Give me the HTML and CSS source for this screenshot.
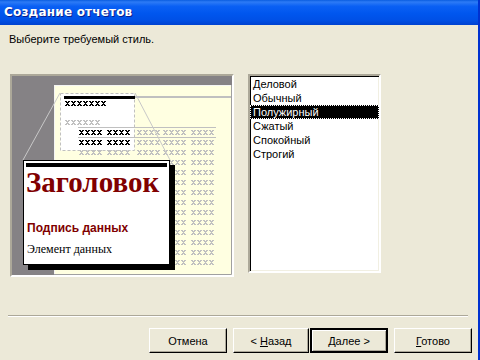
FILE: index.html
```html
<!DOCTYPE html>
<html lang="ru">
<head>
    <meta charset="UTF-8">
    <title>Создание отчетов</title>
    <link rel="stylesheet" href="styles.css">
</head>
<body>
    <div class="window">
        <div class="titlebar">Создание отчетов</div>

        <div class="client">
            <p class="prompt">Выберите требуемый стиль.</p>

            <div class="main">
                <div class="preview">
                    <svg width="220" height="199" viewBox="12 76 220 199">
                        <defs>
                            <pattern id="xb" width="6" height="5" patternUnits="userSpaceOnUse">
                                <path d="M0 0h2v1h-2zM3 0h2v1h-2zM1 1h3v1h-3zM2 2h1v1h-1zM1 3h3v1h-3zM0 4h2v1h-2zM3 4h2v1h-2z" fill="#000"/>
                            </pattern>
                            <pattern id="xg" width="6" height="5" patternUnits="userSpaceOnUse">
                                <path d="M0 0h2v1h-2zM3 0h2v1h-2zM1 1h3v1h-3zM2 2h1v1h-1zM1 3h3v1h-3zM0 4h2v1h-2zM3 4h2v1h-2z" fill="#c0c0c0"/>
                            </pattern>
                            <g id="row">
                                <rect x="0" width="24" height="5" fill="url(#xg)" transform="translate(79,0)"/>
                                <rect x="0" width="24" height="5" fill="url(#xg)" transform="translate(107,0)"/>
                                <rect x="0" width="24" height="5" fill="url(#xg)" transform="translate(137,0)"/>
                                <rect x="0" width="24" height="5" fill="url(#xg)" transform="translate(163,0)"/>
                                <rect x="0" width="24" height="5" fill="url(#xg)" transform="translate(191,0)"/>
                            </g>
                        </defs>

                        <rect x="12" y="76" width="220" height="199" fill="#858285"/>

                        <!-- page -->
                        <rect x="54" y="85" width="178" height="190" fill="#ffffe1"/>
                        <path d="M54.5 275V85.5H232" stroke="#f4f4f4" fill="none"/>
                        <path d="M54 274.5H231.5V85" stroke="#a0a0a0" fill="none"/>
                        <rect x="135" y="96" width="96" height="2" fill="#c0c0c0"/>

                        <!-- zoomed area -->
                        <rect x="60.5" y="93.5" width="74" height="57" fill="#fff" stroke="#c0c0c0" stroke-dasharray="3 2"/>
                        <rect x="64" y="96" width="71" height="3" fill="#000"/>
                        <rect x="0" width="42" height="5" fill="url(#xb)" transform="translate(65,101)"/>
                        <rect x="0" width="36" height="5" fill="url(#xg)" transform="translate(65,120)"/>
                        <path d="M78 127.5H216M78 137.5H216" stroke="#c0c0c0"/>

                        <use href="#row" y="130"/>
                        <use href="#row" y="140"/>
                        <rect x="0" width="24" height="5" fill="#fff" transform="translate(79,130)"/>
                        <rect x="0" width="24" height="5" fill="#fff" transform="translate(107,130)"/>
                        <rect x="0" width="24" height="5" fill="#fff" transform="translate(79,140)"/>
                        <rect x="0" width="24" height="5" fill="#fff" transform="translate(107,140)"/>
                        <rect x="0" width="24" height="5" fill="url(#xb)" transform="translate(79,130)"/>
                        <rect x="0" width="24" height="5" fill="url(#xb)" transform="translate(107,130)"/>
                        <rect x="0" width="24" height="5" fill="url(#xb)" transform="translate(79,140)"/>
                        <rect x="0" width="24" height="5" fill="url(#xb)" transform="translate(107,140)"/>
                        <use href="#row" y="150"/>
                        <use href="#row" y="160"/>
                        <use href="#row" y="170"/>
                        <use href="#row" y="180"/>
                        <use href="#row" y="190"/>
                        <use href="#row" y="200"/>
                        <use href="#row" y="210"/>
                        <use href="#row" y="220"/>
                        <use href="#row" y="230"/>
                        <use href="#row" y="240"/>
                        <use href="#row" y="250"/>
                        <use href="#row" y="260"/>

                        <path d="M60 93L23 160M135 93L170 160" stroke="#c8c8c8"/>

                        <!-- magnified card -->
                        <rect x="28" y="165" width="147" height="105" fill="#000"/>
                        <rect x="23.5" y="160.5" width="146" height="104" fill="#fff" stroke="#000"/>
                        <rect x="26" y="163" width="141" height="4" fill="#000"/>
                        <text x="26" y="192" class="card-title">Заголовок</text>
                        <text x="27" y="232" class="card-label">Подпись данных</text>
                        <text x="27" y="253" class="card-item">Элемент данных</text>
                    </svg>
                </div>

                <ul class="styles">
                    <li>Деловой</li>
                    <li>Обычный</li>
                    <li class="selected">Полужирный</li>
                    <li>Сжатый</li>
                    <li>Спокойный</li>
                    <li>Строгий</li>
                </ul>
            </div>

            <div class="separator"></div>

            <div class="buttons">
                <button class="btn">Отмена</button>
                <button class="btn back">&lt; <u>Н</u>азад</button>
                <button class="btn default"><u>Д</u>алее &gt;</button>
                <button class="btn"><u>Г</u>отово</button>
            </div>
        </div>
    </div>
</body>
</html>
```

FILE: styles.css
```css
body {
    margin: 0;
    padding: 0;
    font-family: "Liberation Sans", Arial, sans-serif;
    font-size: 11px;
    background-color: #ece9d8;
}

.window {
    width: 478px;
    height: 360px;
    border-right: 2px solid #0031d0;
    display: flex;
    flex-direction: column;
}

.titlebar {
    height: 25px;
    line-height: 25px;
    padding-left: 4px;
    color: #fff;
    font-family: "DejaVu Sans", sans-serif;
    font-weight: bold;
    font-size: 12px;
    letter-spacing: 0.2px;
    text-shadow: 1px 1px 0 #0a1e8a;
    background: linear-gradient(to bottom, #0a5de0 0%, #2d7bf6 8%, #0a60f4 25%, #0056ee 55%, #0050e6 80%, #0042d0 100%);
}

.client {
    flex-grow: 1;
    display: flex;
    flex-direction: column;
}

.prompt {
    margin: 7px 0 0 9px;
    line-height: 14px;
}

.main {
    display: flex;
    align-items: flex-start;
    margin-top: 28px;
    margin-left: 10px;
}

.preview {
    width: 220px;
    height: 199px;
    border: 2px solid;
    border-color: #aca899 #fff #fff #aca899;
    box-shadow: inset 1px 1px 0 #716f64;
}

.preview svg {
    display: block;
}

.card-title {
    font-family: "Liberation Serif", serif;
    font-weight: bold;
    font-size: 29px;
    fill: #800000;
}

.card-label {
    font-family: "Liberation Sans", sans-serif;
    font-weight: bold;
    font-size: 12px;
    fill: #800000;
}

.card-item {
    font-family: "Liberation Serif", serif;
    font-size: 12px;
    fill: #000;
}

.styles {
    list-style: none;
    margin: 0 0 0 14px;
    padding: 0;
    width: 129px;
    height: 195px;
    background-color: #fff;
    border: 2px solid;
    border-color: #aca899 #fff #fff #aca899;
    box-shadow: inset 1px 1px 0 #000, inset -1px -1px 0 #f1efe2;
}

.styles li {
    height: 14px;
    line-height: 14px;
    padding-left: 3px;
}

.styles li:first-child {
    margin-top: 1px;
}

.styles li.selected {
    background-color: #000;
    color: #fff;
    outline: 1px dotted #fff;
    outline-offset: -1px;
}

.separator {
    margin: 38px 0 0 8px;
    width: 460px;
    height: 1px;
    background-color: #aca899;
    border-bottom: 1px solid #fff;
}

.buttons {
    display: flex;
    justify-content: flex-end;
    margin-top: 11px;
    padding-right: 6px;
}

.btn {
    width: 78px;
    height: 25px;
    margin-left: 6px;
    padding: 0;
    font-family: "Liberation Sans", Arial, sans-serif;
    font-size: 11px;
    color: #000;
    background-color: #ece9d8;
    border: 1px solid;
    border-color: #fff #000 #000 #fff;
    box-shadow: inset -1px -1px 0 #aca899;
}

.btn.back {
    width: 76px;
}

.btn.default {
    margin-left: 1px;
    border: 2px solid #000;
    box-shadow: inset 1px 1px 0 #fff, inset -1px -1px 0 #aca899;
}

.btn u {
    text-decoration: underline;
}
```
